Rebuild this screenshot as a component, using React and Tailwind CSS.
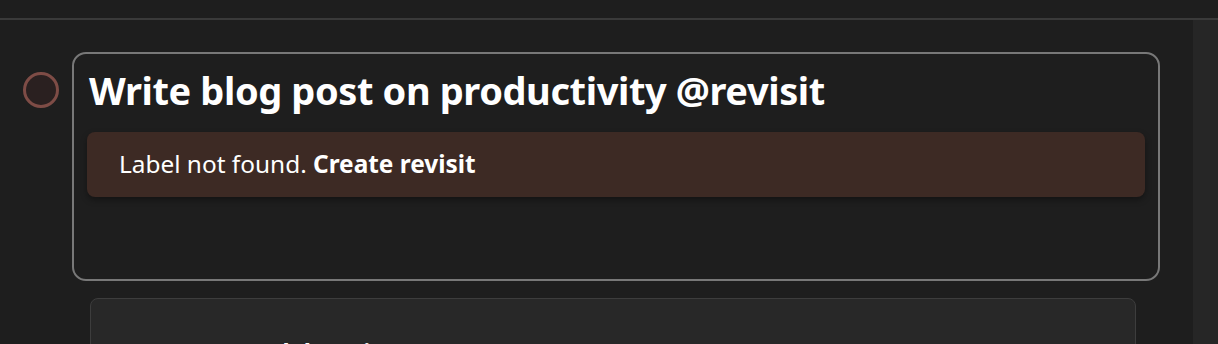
import React from 'react'

const font = { fontFamily: '"Noto Sans", "Open Sans", sans-serif' }

const App = () => {
    return (
        <div className="w-[1218px] h-[344px] overflow-hidden bg-[#1e1e1e] text-white" style={font}>
            <div className="h-[20px] bg-[#1e1e1e] border-b-2 border-[#3a3a3a]" />
            <div className="flex h-[324px]">
                <div className="flex-1 pt-[32px]">
                    <div className="flex items-start">
                        <div className="ml-[23px] mt-[20px] w-[36px] h-[36px] rounded-full border-[3px] border-[#7e4c46] bg-[#2a2020]" />
                        <div className="ml-[13px] w-[1088px] h-[229px] rounded-[14px] border-2 border-[#787878] bg-[#1e1e1e] px-[13px]">
                            <h1 className="pt-[12px] pl-[2px] text-[38px] leading-[48px] font-bold tracking-[-0.4px]">
                                Write blog post on productivity @revisit
                            </h1>
                            <div className="mt-[18px] h-[65px] rounded-[8px] bg-[#3d2a24] shadow-[0_3px_6px_rgba(0,0,0,0.35)] flex items-center pl-[32px] text-[24.4px]">
                                <span>Label not found. <span className="font-bold">Create revisit</span></span>
                            </div>
                        </div>
                    </div>
                    <div className="ml-[90px] mt-[17px] w-[1046px] h-[80px] rounded-t-[8px] border-[1.5px] border-[#3d3d3d] bg-[#282828] pt-[38px] pl-[105px]">
                        <p className="text-[24px] font-bold leading-[30px]">New Tab location</p>
                    </div>
                </div>
                <div className="w-[25px] bg-[#262626]" />
            </div>
        </div>
    )
}

export default App
